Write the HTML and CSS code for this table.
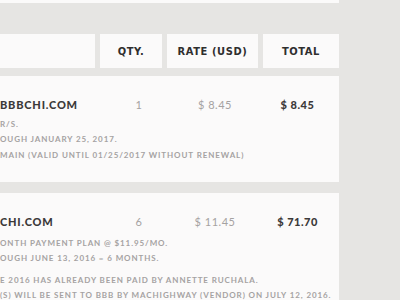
FILE: index.html
```html
<!DOCTYPE html>
<html>
<head>
<meta charset="utf-8">
<link rel="stylesheet" href="styles.css">
</head>
<body>
<div class="page">
  <div class="top-card"></div>
  <div class="head-row">
    <div class="head-cell"></div>
    <div class="head-cell">QTY.</div>
    <div class="head-cell">RATE (USD)</div>
    <div class="head-cell">TOTAL</div>
  </div>
  <div class="item">
    <div class="item-main">
      <div class="title">BBBCHI.COM</div>
      <div class="qty">1</div>
      <div class="rate">$ 8.45</div>
      <div class="total">$ 8.45</div>
    </div>
    <div class="details">
      <p>R/S.<br>OUGH JANUARY 25, 2017.</p>
      <p>MAIN (VALID UNTIL 01/25/2017 WITHOUT RENEWAL)</p>
    </div>
  </div>
  <div class="item item-last">
    <div class="item-main">
      <div class="title">CHI.COM</div>
      <div class="qty">6</div>
      <div class="rate">$ 11.45</div>
      <div class="total">$ 71.70</div>
    </div>
    <div class="details">
      <p>ONTH PAYMENT PLAN @ $11.95/MO.<br>OUGH JUNE 13, 2016 = 6 MONTHS.</p>
      <p>E 2016 HAS ALREADY BEEN PAID BY ANNETTE RUCHALA.<br>(S) WILL BE SENT TO BBB BY MACHIGHWAY (VENDOR) ON JULY 12, 2016.</p>
    </div>
  </div>
</div>
</body>
</html>
```

FILE: styles.css
```css
html, body {
  margin: 0;
  padding: 0;
  background: #e6e5e3;
  overflow: hidden;
}
.page {
  width: 339px;
}
.top-card {
  height: 3px;
  background: #fbfafa;
}
.head-row {
  margin-top: 31px;
  display: grid;
  grid-template-columns: 95px 62px 91px 76px;
  column-gap: 5px;
}
.head-cell {
  height: 34px;
  background: #fbfafa;
  display: flex;
  align-items: center;
  justify-content: center;
  font-family: "DejaVu Sans Condensed", "DejaVu Sans", sans-serif;
  font-stretch: condensed;
  font-weight: bold;
  font-size: 11px;
  letter-spacing: 0.6px;
  color: #2f2e2e;
}
.item {
  margin-top: 8px;
  background: #fbfafa;
  height: 106px;
  box-sizing: border-box;
  padding-top: 22px;
  font-family: Lato, "Open Sans", sans-serif;
}
.item-last {
  margin-top: 11px;
  height: 120px;
}
.item-main {
  display: grid;
  grid-template-columns: 120px 38px 114px 51px;
  line-height: 14px;
  font-size: 11px;
}
.title {
  font-weight: 900;
  letter-spacing: 0.8px;
  color: #3b3939;
  white-space: nowrap;
}
.qty, .rate {
  text-align: center;
  color: #a5a2a2;
  letter-spacing: 0.5px;
}
.total {
  text-align: center;
  font-weight: 900;
  color: #3b3939;
  letter-spacing: 0.5px;
}
.details {
  margin-top: 5px;
  font-size: 8px;
  line-height: 15px;
  font-weight: bold;
  letter-spacing: 0.9px;
  color: #a5a2a2;
  white-space: nowrap;
}
.details p {
  margin: 0;
}
.details p + p {
  margin-top: 1px;
}
.item-last .details {
  margin-top: 7px;
}
.item-last .details p + p {
  margin-top: 7px;
}
```
